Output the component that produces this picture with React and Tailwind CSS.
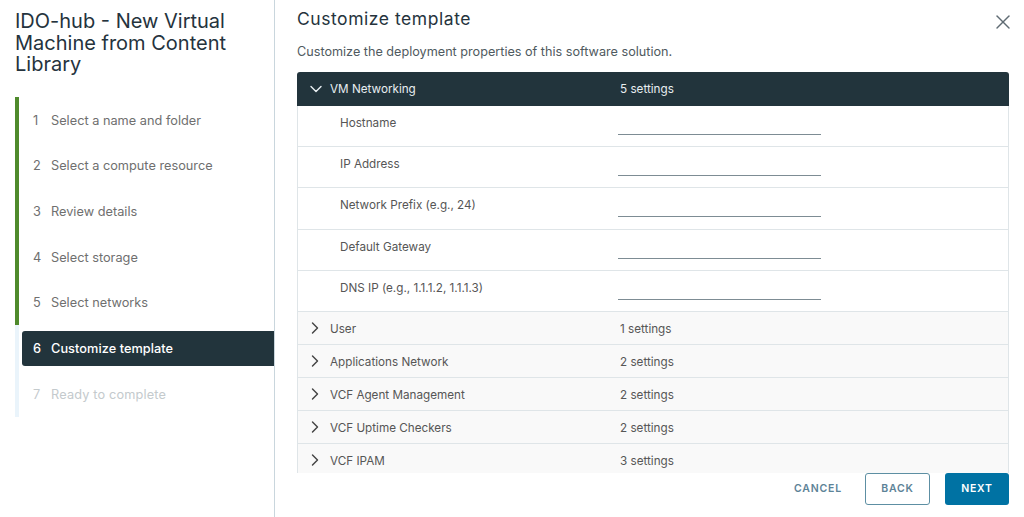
import React from "react";
import { ChevronDown, ChevronRight, X } from "lucide-react";

const steps = [
  ["1", "Select a name and folder"],
  ["2", "Select a compute resource"],
  ["3", "Review details"],
  ["4", "Select storage"],
  ["5", "Select networks"],
];
const fields = ["Hostname", "IP Address", "Network Prefix (e.g., 24)", "Default Gateway", "DNS IP (e.g., 1.1.1.2, 1.1.1.3)"];
const groups = [
  ["User", "1 settings"],
  ["Applications Network", "2 settings"],
  ["VCF Agent Management", "2 settings"],
  ["VCF Uptime Checkers", "2 settings"],
  ["VCF IPAM", "3 settings"],
];

export default function App() {
  return (
    <div className="flex h-[517px] w-[1024px] overflow-hidden bg-white font-['Inter',sans-serif] text-[12.75px] text-[#565656]">
      <aside className="flex h-full w-[275px] shrink-0 flex-col border-r border-[#c9d6dd] pl-[15px] pt-[11px]">
        <h1 className="text-[20px] leading-[21.5px] font-normal text-[#25333d]">
          IDO-hub - New Virtual Machine from Content Library
        </h1>
        <div className="mt-[21px] w-full">
          <div className="flex h-[228px] flex-col border-l-4 border-[#4f8a2c]">
            {steps.map(([n, t]) => (
              <div key={n} className="flex h-[45.7px] items-center pl-[14px] pt-[2px] text-[#6f6f6f]">
                <span className="w-[18px]">{n}</span>
                <span>{t}</span>
              </div>
            ))}
          </div>
          <div className="border-l-4 border-[#eaf4fb] pt-[6px]">
            <div className="ml-[3px] flex h-[35px] items-center rounded-l-[3px] bg-[#22343c] pl-[11px] pt-[1px] font-medium tracking-[0.05px] text-white">
              <span className="w-[18px]">6</span>
              <span>Customize template</span>
            </div>
            <div className="flex h-[51px] items-start pl-[14px] pt-[19px] tracking-[0.15px] text-[#c4cacd]">
              <span className="w-[18px]">7</span>
              <span>Ready to complete</span>
            </div>
          </div>
        </div>
      </aside>
      <main className="flex min-w-0 flex-1 flex-col pl-[22px] pr-[15px]">
        <div className="flex items-start justify-between pt-[8px]">
          <h2 className="text-[17.5px] leading-[22px] font-normal tracking-[0.55px] text-[#25333d]">Customize template</h2>
          <X className="mb-[-4px] mr-[-6px] mt-[2px] text-[#5f6b73]" size={24} strokeWidth={1.4} />
        </div>
        <p className="mt-[12px] text-[12.65px] leading-[20px] text-[#4f5a60]">Customize the deployment properties of this software solution.</p>
        <div className="mt-[10px] h-[401px] overflow-hidden text-[11.7px]">
          <div className="flex h-[34px] items-center rounded-t-[3px] bg-[#22343c] text-[#e8eef1]">
            <ChevronDown className="ml-[9px] mr-[4px]" size={20} strokeWidth={1.7} />
            <span className="w-[290px] pt-[2px]">VM Networking</span>
            <span className="pt-[2px]">5 settings</span>
          </div>
          <div className="border-x border-[#dfe5e8]">
            {fields.map((f) => (
              <div key={f} className="flex h-[41.2px] border-b border-[#dfe5e8] bg-white">
                <span className="w-[320px] pl-[42px] pt-[9px] leading-[17px]">{f}</span>
                <span className="mt-[28px] h-px w-[203px] bg-[#7d8c94]" />
              </div>
            ))}
            {groups.map(([g, s]) => (
              <div key={g} className="flex h-[33px] shrink-0 items-center border-b border-[#dfe5e8] bg-[#f9f9f9] pt-[1px]">
                <ChevronRight className="ml-[7px] mr-[5px] text-[#444]" size={20} strokeWidth={1.7} />
                <span className="w-[290px] pt-[2px]">{g}</span>
                <span className="pt-[2px]">{s}</span>
              </div>
            ))}
          </div>
        </div>
        <div className="flex items-start justify-end gap-[15px]">
          <button className="mr-[8px] h-[32px] text-[10.5px] font-semibold tracking-[0.8px] text-[#5d8397]">CANCEL</button>
          <button className="h-[32px] w-[65px] rounded-[3px] border border-[#5d8fa3] text-[10.5px] font-semibold tracking-[0.8px] text-[#5d8397]">BACK</button>
          <button className="h-[32px] w-[64px] rounded-[3px] bg-[#0072a3] text-[10.5px] font-semibold tracking-[0.8px] text-white">NEXT</button>
        </div>
      </main>
    </div>
  );
}
